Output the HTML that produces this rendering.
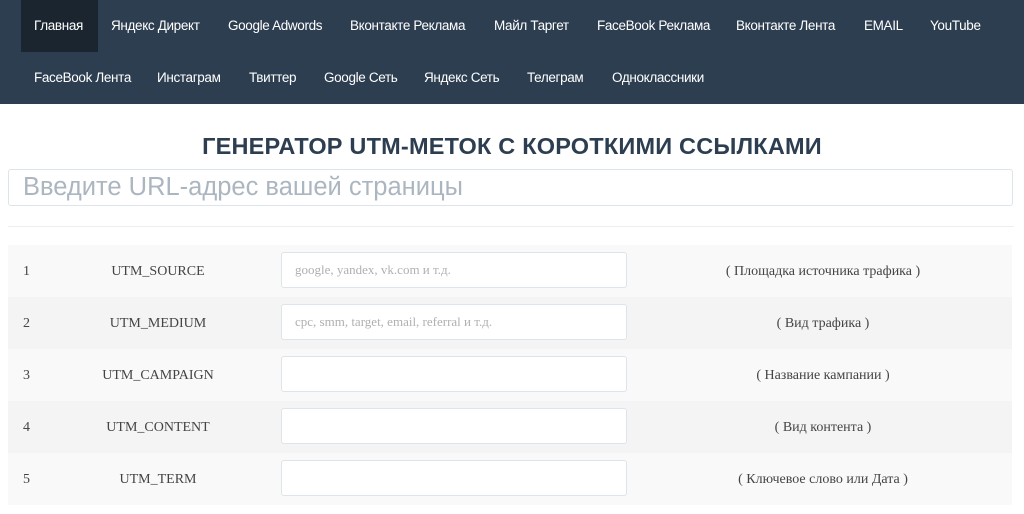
<!DOCTYPE html>
<html><head><meta charset="utf-8"><style>
body{margin:0;width:1024px;height:514px;background:#fff;position:relative;overflow:hidden;font-family:"Liberation Sans",sans-serif}
.nav{position:absolute;left:0;top:0;width:1024px;height:104px;background:#2c3e50}
.nav span{position:absolute;color:#fff;font-size:13.5px;line-height:52px;letter-spacing:-0.35px}
.act{position:absolute;left:21px;top:0;width:77px;height:52px;background:#1a252f}
h1{position:absolute;left:0;top:133px;width:1024px;margin:0;text-align:center;font-size:23.5px;color:#2c3e50;font-weight:bold;letter-spacing:0.2px}
.url{position:absolute;left:8px;top:169px;width:1003px;height:35px;border:1.5px solid #dce4ec;border-radius:3px;color:#acb6c0;font-size:25.5px;line-height:35px;box-sizing:content-box}
.url span{margin-left:14px}
.hr{position:absolute;left:8px;top:226px;width:1006px;height:1px;background:#eee}
.row{position:absolute;left:8px;width:1004px;height:52px;font-family:"Liberation Serif",serif;font-size:14px;color:#444}
.row .n{position:absolute;left:15px;top:19px}
.row .k{position:absolute;left:60px;width:180px;text-align:center;top:19px}
.row .i{position:absolute;left:273px;top:7px;width:344px;height:34px;background:#fff;border:1.5px solid #dce4ec;border-radius:3px;color:#b0b0b0;font-size:13px;line-height:34px;text-indent:13px}
.row .d{position:absolute;left:620px;width:390px;text-align:center;top:19px}
</style></head><body>
<div class="nav"><div class="act"></div>
<span style="left:34px;top:0">Главная</span>
<span style="left:111px;top:0">Яндекс Директ</span>
<span style="left:228px;top:0">Google Adwords</span>
<span style="left:350px;top:0">Вконтакте Реклама</span>
<span style="left:494px;top:0">Майл Таргет</span>
<span style="left:597px;top:0">FaceBook Реклама</span>
<span style="left:736px;top:0">Вконтакте Лента</span>
<span style="left:864px;top:0">EMAIL</span>
<span style="left:930px;top:0">YouTube</span>
<span style="left:34px;top:52px">FaceBook Лента</span>
<span style="left:157px;top:52px">Инстаграм</span>
<span style="left:249px;top:52px">Твиттер</span>
<span style="left:324px;top:52px">Google Сеть</span>
<span style="left:424px;top:52px">Яндекс Сеть</span>
<span style="left:527px;top:52px">Телеграм</span>
<span style="left:612px;top:52px">Одноклассники</span>
</div>
<h1>ГЕНЕРАТОР UTM-МЕТОК С КОРОТКИМИ ССЫЛКАМИ</h1>
<div class="url"><span>Введите URL-адрес вашей страницы</span></div>
<div class="hr"></div>
<div class="row" style="top:245px;background:#f9f9f9"><span class="n">1</span><span class="k">UTM_SOURCE</span><div class="i">google, yandex, vk.com и т.д.</div><span class="d">( Площадка источника трафика )</span></div>
<div class="row" style="top:297px;background:#f4f4f4"><span class="n">2</span><span class="k">UTM_MEDIUM</span><div class="i">cpc, smm, target, email, referral и т.д.</div><span class="d">( Вид трафика )</span></div>
<div class="row" style="top:349px;background:#f9f9f9"><span class="n">3</span><span class="k">UTM_CAMPAIGN</span><div class="i"></div><span class="d">( Название кампании )</span></div>
<div class="row" style="top:401px;background:#f4f4f4"><span class="n">4</span><span class="k">UTM_CONTENT</span><div class="i"></div><span class="d">( Вид контента )</span></div>
<div class="row" style="top:453px;background:#f9f9f9"><span class="n">5</span><span class="k">UTM_TERM</span><div class="i"></div><span class="d">( Ключевое слово или Дата )</span></div>
</body></html>
